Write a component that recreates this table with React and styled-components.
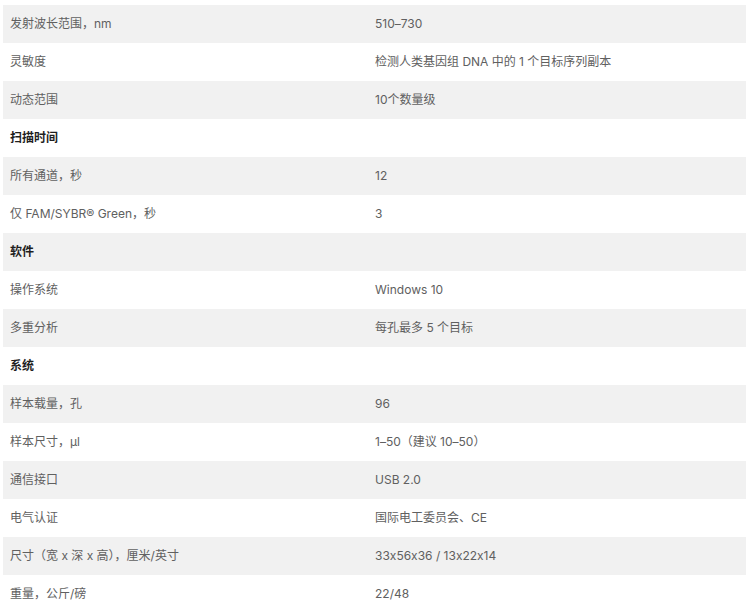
import React from "react";
import styled, { createGlobalStyle } from "styled-components";

const GlobalStyle = createGlobalStyle`
  html, body {
    margin: 0;
    padding: 0;
    background: #ffffff;
    font-family: "Inter", "Noto Sans CJK SC", "Noto Sans", sans-serif;
  }
`;

const Page = styled.div`
  padding: 5px 4px 0 3px;
  height: 608px;
  overflow: hidden;
  box-sizing: border-box;
`;

const SpecTable = styled.div`
  display: flex;
  flex-direction: column;
`;

const Row = styled.div`
  display: grid;
  grid-template-columns: 365px 1fr;
  height: 38px;
  align-items: center;
  background: ${(p) => (p.$shaded ? "#f1f1f1" : "#ffffff")};
`;

const Cell = styled.div`
  padding: 0 7px;
  font-size: 12px;
  line-height: 18px;
  color: ${(p) => (p.$heading ? "#1f1f1f" : "#606060")};
  font-weight: ${(p) => (p.$heading ? 700 : 400)};
  font-feature-settings: "calt" 0;
  white-space: nowrap;
`;

const rows = [
  ["发射波长范围，nm", "510–730"],
  ["灵敏度", "检测人类基因组 DNA 中的 1 个目标序列副本"],
  ["动态范围", "10个数量级"],
  ["扫描时间", null],
  ["所有通道，秒", "12"],
  ["仅 FAM/SYBR® Green，秒", "3"],
  ["软件", null],
  ["操作系统", "Windows 10"],
  ["多重分析", "每孔最多 5 个目标"],
  ["系统", null],
  ["样本载量，孔", "96"],
  ["样本尺寸，µl", "1–50（建议 10–50）"],
  ["通信接口", "USB 2.0"],
  ["电气认证", "国际电工委员会、CE"],
  ["尺寸（宽 x 深 x 高），厘米/英寸", "33x56x36 / 13x22x14"],
  ["重量，公斤/磅", "22/48"],
];

export default function App() {
  return (
    <>
      <GlobalStyle />
      <Page>
        <SpecTable>
          {rows.map(([label, value], i) => (
            <Row key={label} $shaded={i % 2 === 0}>
              <Cell $heading={value === null}>{label}</Cell>
              <Cell>{value}</Cell>
            </Row>
          ))}
        </SpecTable>
      </Page>
    </>
  );
}
